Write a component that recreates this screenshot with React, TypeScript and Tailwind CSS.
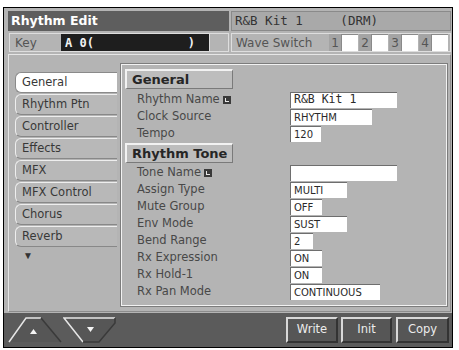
import React from 'react';

const sans = "font-['DejaVu_Sans',sans-serif]";
const mono = "font-['DejaVu_Sans_Mono','Liberation_Mono',monospace]";

const tabs = ['General', 'Rhythm Ptn', 'Controller', 'Effects', 'MFX', 'MFX Control', 'Chorus', 'Reverb'];

type Row = { label: string; value: string; w: number; icon?: boolean; mono?: boolean };

const general: Row[] = [
  { label: 'Rhythm Name', value: 'R&B Kit 1', w: 107, icon: true, mono: true },
  { label: 'Clock Source', value: 'RHYTHM', w: 82 },
  { label: 'Tempo', value: '120', w: 31 },
];

const tone: Row[] = [
  { label: 'Tone Name', value: '', w: 107, icon: true },
  { label: 'Assign Type', value: 'MULTI', w: 57 },
  { label: 'Mute Group', value: 'OFF', w: 32 },
  { label: 'Env Mode', value: 'SUST', w: 57 },
  { label: 'Bend Range', value: '2', w: 23 },
  { label: 'Rx Expression', value: 'ON', w: 32 },
  { label: 'Rx Hold-1', value: 'ON', w: 32 },
  { label: 'Rx Pan Mode', value: 'CONTINUOUS', w: 90 },
];

// small "edit name" marker after the label
function NameIcon() {
  return (
    <svg width="8" height="8" viewBox="0 0 8 8" className="ml-[3px]">
      <rect x="0" y="0" width="8" height="8" fill="#3a3a3a" />
      <rect x="2" y="2" width="1" height="4" fill="#e8e8e8" />
      <rect x="2" y="5" width="4" height="1" fill="#e8e8e8" />
    </svg>
  );
}

function Header({ text }: { text: string }) {
  return (
    <div className={`w-[108px] h-[20px] ml-[2px] flex items-center pl-[5px] bg-[#bdbdbd] border-t-2 border-l-2 border-[#f2f2f2] border-b border-r border-b-[#7a7a7a] border-r-[#7a7a7a] text-[13px] font-bold text-[#262626] ${sans}`}>
      {text}
    </div>
  );
}

function ParamRow({ r }: { r: Row }) {
  return (
    <div className="h-[17px] flex items-center">
      <div className={`w-[167px] pl-[14px] flex items-center text-[11.5px] text-[#484848] ${sans}`}>
        {r.label}
        {r.icon && <NameIcon />}
      </div>
      <div
        style={{ width: r.w }}
        className={`h-[16px] bg-white border-t border-l border-[#6e6e6e] flex items-center pl-[3px] text-[#2a2a2a] ${r.mono ? `${mono} text-[11.5px]` : `${sans} text-[10px]`}`}
      >
        {r.value}
      </div>
    </div>
  );
}

function UpButton() {
  return (
    <svg width="54" height="26" viewBox="0 0 54 26">
      <path d="M1 25 L18 1 L33 1 L53 25 Z" fill="#565656" />
      <path d="M1 25 L18 1 L33 1" fill="none" stroke="#e6e6e6" strokeWidth="1.5" />
      <path d="M33 1 L53 25" fill="none" stroke="#3a3a3a" strokeWidth="1.5" />
      <path d="M22 17 L25.5 12 L29 17 Z" fill="#f4f4f4" />
    </svg>
  );
}

function DownButton() {
  return (
    <svg width="54" height="26" viewBox="0 0 54 26">
      <path d="M1 1 L52 1 L52 6 L36 25 L20 25 Z" fill="#565656" />
      <path d="M20 25 L1 1 L52 1" fill="none" stroke="#e6e6e6" strokeWidth="1.5" />
      <path d="M52 1 L52 6 L36 25 L20 25" fill="none" stroke="#3a3a3a" strokeWidth="1.5" />
      <path d="M24 10 L31 10 L27.5 15 Z" fill="#f4f4f4" />
    </svg>
  );
}

function FuncButton({ text, w }: { text: string; w: number }) {
  return (
    <div
      style={{ width: w }}
      className={`h-[26px] flex items-center justify-center bg-[#565656] border-t-2 border-l-2 border-[#d8d8d8] border-b-2 border-r-2 border-b-[#333] border-r-[#333] text-[11.5px] text-[#ececec] ${sans}`}
    >
      {text}
    </div>
  );
}

export default function App() {
  return (
    <div className="w-[459px] h-[350px] bg-white pl-[3px] pt-[7px]">
      <div className="w-[450px] h-[341px] border border-black bg-[#b4b4b4] flex flex-col pt-[3px] pl-[4px] pr-[1px]">
        {/* title */}
        <div className="h-[20px] flex shrink-0">
          <div className={`w-[221px] bg-[#5e5e5e] flex items-center pl-[3px] text-[12.5px] font-bold text-white ${sans}`}>
            Rhythm Edit
          </div>
          <div className={`flex-1 ml-[2px] bg-[#a9a9a9] border border-[#8a8a8a] flex items-center pl-[3px] whitespace-pre text-[12.5px] text-[#333] ${mono}`}>
            {'R&B Kit 1     (DRM)'}
          </div>
        </div>

        {/* key / wave switch */}
        <div className="h-[19px] mt-[2px] flex shrink-0">
          <div className="w-[220px] ml-[1px] flex border border-[#dedede]">
            <div className={`w-[51px] flex items-center pl-[5px] text-[12px] text-[#555] ${sans}`}>Key</div>
            <div className={`w-[148px] bg-[#1e1e1e] flex items-center pl-[4px] whitespace-pre text-[12px] font-bold text-[#f2f2f2] ${mono}`}>
              {'A 0(             )'}
            </div>
            <div className="flex-1 border-l border-[#dedede] bg-[#b4b4b4]" />
          </div>
          <div className="flex-1 ml-[2px] flex items-center border border-[#dedede]">
            <div className={`w-[97px] pl-[4px] text-[12px] text-[#555] ${sans}`}>Wave Switch</div>
            {['1', '2', '3', '4'].map((n) => (
              <div key={n} className="flex h-[17px] mr-[1px]">
                <div className={`w-[12px] bg-[#a4a4a4] flex items-center justify-center text-[12px] text-[#555] ${sans}`}>{n}</div>
                <div className="w-[17px] bg-white border-t border-l border-[#8a8a8a]" />
              </div>
            ))}
          </div>
        </div>

        {/* main area */}
        <div className="h-[258px] mt-[2px] flex items-start border-t border-l border-[#e6e6e6] border-b border-r border-b-[#8c8c8c] border-r-[#8c8c8c] pl-[6px] shrink-0">
          <div className="w-[102px] mt-[17px] flex flex-col gap-[1px]">
            {tabs.map((t, i) => (
              <div
                key={t}
                className={`h-[21px] flex items-center pl-[6px] rounded-l-[6px] border-t border-l border-b text-[11.5px] text-[#383838] ${sans} ${
                  i === 0 ? 'bg-white border-[#8a8a8a]' : 'bg-[#b8b8b8] border-t-[#eeeeee] border-l-[#eeeeee] border-b-[#888]'
                }`}
              >
                {t}
              </div>
            ))}
            <div className="pl-[8px] text-[10px] text-[#333] leading-[14px]">▼</div>
          </div>

          <div className="flex-1 h-[244px] mt-[8px] ml-[3px] mr-[2px] border border-[#7c7c7c] shadow-[inset_1px_1px_0_#f2f2f2,inset_-1px_-1px_0_#f2f2f2] pt-[5px] pl-[2px]">
            <Header text="General" />
            <div className="mt-[2px]">
              {general.map((r) => (
                <ParamRow key={r.label} r={r} />
              ))}
            </div>
            <div className="mt-[1px]">
              <Header text="Rhythm Tone" />
            </div>
            <div className="mt-[1px]">
              {tone.map((r) => (
                <ParamRow key={r.label} r={r} />
              ))}
            </div>
          </div>
        </div>

        {/* bottom bar */}
        <div className="flex-1 mt-[1px] -ml-[4px] -mr-[1px] bg-[#5b5b5b] flex items-center pl-[4px] pr-[3px]">
          <UpButton />
          <div className="ml-[1px]">
            <DownButton />
          </div>
          <div className="flex-1" />
          <FuncButton text="Write" w={52} />
          <div className="w-[3px]" />
          <FuncButton text="Init" w={51} />
          <div className="w-[4px]" />
          <FuncButton text="Copy" w={53} />
        </div>
      </div>
    </div>
  );
}
